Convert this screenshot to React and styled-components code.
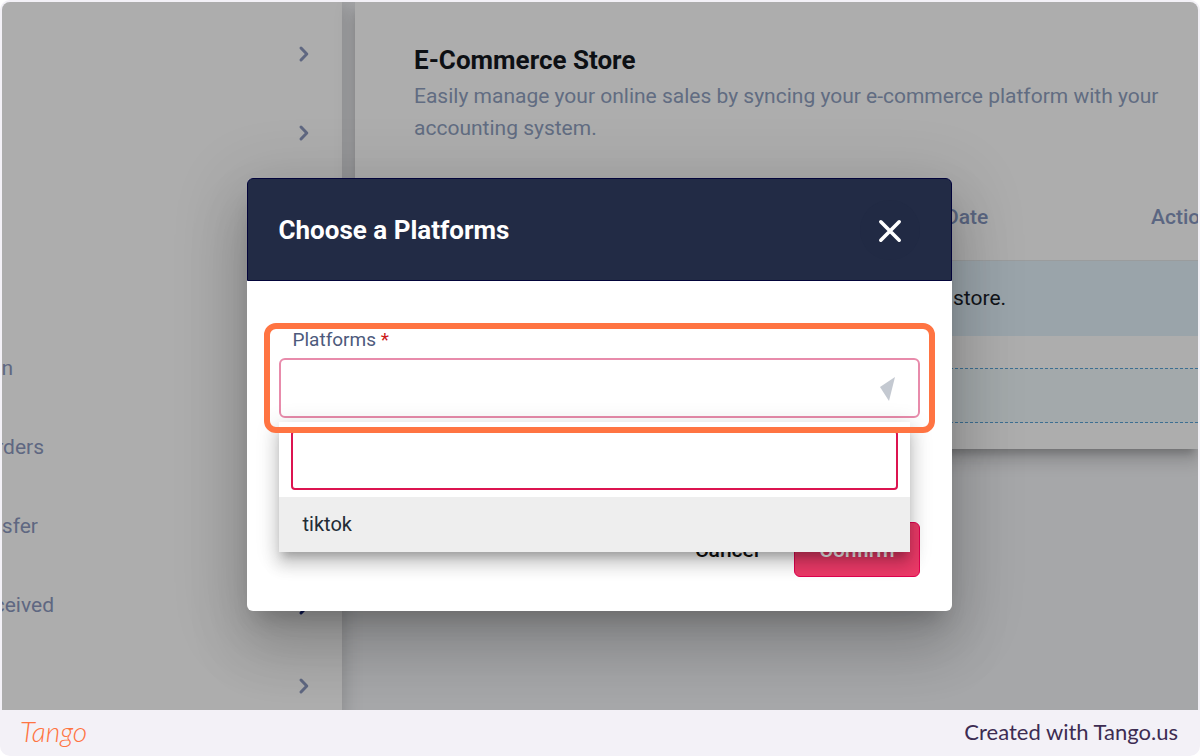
import { useState } from 'react';
import styled, { createGlobalStyle } from 'styled-components';

const navItems = [
  { id: 'first' },
  { id: 'second' },
  { id: 'third' },
  { id: 'fourth' },
  { id: 'n', label: 'n', labelWidth: 11 },
  { id: 'orders', label: 'rders', labelWidth: 42 },
  { id: 'transfer', label: 'sfer', labelWidth: 36 },
  { id: 'received', label: 'ceived', labelWidth: 52, active: true },
  { id: 'last' },
];

const ChevronIcon = () => (
  <svg width="12" height="18" viewBox="0 0 12 18" fill="none" aria-hidden="true">
    <path
      d="M3 3 L8.8 9 L3 15"
      stroke="currentColor"
      strokeWidth="3"
      strokeLinecap="round"
      strokeLinejoin="round"
    />
  </svg>
);

const CloseIcon = () => (
  <svg width="24" height="24" viewBox="0 0 24 24" fill="none" aria-hidden="true">
    <path d="M2.8 2.8 L21.2 21.2 M21.2 2.8 L2.8 21.2" stroke="currentColor" strokeWidth="3.6" strokeLinecap="round" />
  </svg>
);

const ArrowIcon = () => (
  <svg width="16" height="24" viewBox="0 0 16 24" aria-hidden="true">
    <path d="M0 10 L15 0 L9 24 Z" fill="#c4c9d1" />
  </svg>
);

const App = () => {
  const [platform, setPlatform] = useState('');
  const [search, setSearch] = useState('');

  return (
    <Page>
      <GlobalStyle />
      <Screen>
        <Sidebar>
          {navItems.map(({ id, label, labelWidth, active }) => (
            <NavRow key={id} $active={active}>
              <NavLabel $width={labelWidth}>{label}</NavLabel>
              <ChevronIcon />
            </NavRow>
          ))}
        </Sidebar>
        <Main>
          <Card>
            <CardHeader>
              <CardTitle>E-Commerce Store</CardTitle>
              <CardText>
                Easily manage your online sales by syncing your e-commerce platform with your
                accounting system.
              </CardText>
            </CardHeader>
            <StoreTable>
              <colgroup>
                <col width="590" />
                <col width="206" />
                <col width="160" />
              </colgroup>
              <thead>
                <tr>
                  <th />
                  <th>Date</th>
                  <th>Actions</th>
                </tr>
              </thead>
              <tbody>
                <tr>
                  <td />
                  <td>store.</td>
                  <td />
                </tr>
              </tbody>
            </StoreTable>
            <DropZone />
          </Card>
        </Main>

        <Backdrop>
          <Dialog role="dialog" aria-labelledby="dialog-title">
            <DialogHeader>
              <DialogTitle id="dialog-title">Choose a Platforms</DialogTitle>
              <CloseButton type="button" aria-label="Close">
                <CloseIcon />
              </CloseButton>
            </DialogHeader>
            <DialogBody>
              <Field>
                <FieldLabel htmlFor="platform">
                  Platforms <Required>*</Required>
                </FieldLabel>
                <SelectBox>
                  <Select id="platform" value={platform} onChange={(e) => setPlatform(e.target.value)}>
                    <option value="" />
                    <option value="tiktok">tiktok</option>
                  </Select>
                  <SelectArrow>
                    <ArrowIcon />
                  </SelectArrow>
                  <Panel>
                    <SearchWrap>
                      <SearchInput
                        type="text"
                        aria-label="Search platforms"
                        value={search}
                        onChange={(e) => setSearch(e.target.value)}
                      />
                    </SearchWrap>
                    <Option type="button" onClick={() => setPlatform('tiktok')}>
                      tiktok
                    </Option>
                  </Panel>
                </SelectBox>
                <Highlight />
              </Field>
              <Actions>
                <ActionButton type="button">Cancel</ActionButton>
                <ActionButton type="button" $primary>
                  Confirm
                </ActionButton>
              </Actions>
            </DialogBody>
          </Dialog>
        </Backdrop>
      </Screen>
      <Footer>
        <Brand>Tango</Brand>
        <Credit>Created with Tango.us</Credit>
      </Footer>
    </Page>
  );
};

const GlobalStyle = createGlobalStyle`
  *, *::before, *::after {
    box-sizing: border-box;
  }

  body {
    margin: 0;
    background: #ffffff;
    font-family: Roboto, "Liberation Sans", sans-serif;
  }

  h1, h2, p {
    margin: 0;
  }

  button, input, select {
    font-family: inherit;
  }
`;

const Page = styled.div`
  display: flex;
  flex-direction: column;
  min-height: 100vh;
  padding: 2px 2px 0;
  border-radius: 10px;
  background: #f3f1f7;
`;

const Screen = styled.div`
  position: relative;
  display: flex;
  flex: 1;
  overflow: hidden;
  border-radius: 8px 8px 0 0;
  background: #f5f6f9;
`;

const Sidebar = styled.nav`
  flex: none;
  width: 340px;
  padding-top: 12px;
  background: #ffffff;
  box-shadow: 0 0 20px rgba(0, 0, 0, 0.2);

  /* the last row runs past the bottom edge */
  margin-bottom: -16px;
`;

const NavRow = styled.div`
  display: flex;
  align-items: center;
  justify-content: space-between;
  height: 79px;
  padding-right: 32px;
  color: ${({ $active }) => ($active ? '#101f78' : '#8c99bf')};
`;

const NavLabel = styled.span`
  display: flex;
  justify-content: flex-end;
  width: ${({ $width }) => $width || 0}px;
  padding-bottom: 4px;
  overflow: hidden;
  font-size: 21px;
  line-height: 28px;
  color: #8c99bf;
`;

const Main = styled.main`
  flex: 1;
  min-width: 0;
  padding-left: 13px;
`;

const Card = styled.section`
  padding-bottom: 26px;
  background: #ffffff;
  box-shadow:
    0 8px 8px -4px rgba(0, 0, 0, 0.2),
    0 12px 15px 2px rgba(0, 0, 0, 0.1),
    0 4px 21px 3px rgba(0, 0, 0, 0.08);
`;

const CardHeader = styled.header`
  padding: 40px 16px 30px 59px;
`;

const CardTitle = styled.h1`
  font-size: 26px;
  font-weight: 700;
  line-height: 36px;
  color: #14181e;
`;

const CardText = styled.p`
  padding-top: 2px;
  font-size: 21px;
  line-height: 32px;
  color: #909fc0;
`;

const StoreTable = styled.table`
  width: 956px;
  table-layout: fixed;
  border-collapse: collapse;
  text-align: left;

  th {
    height: 86px;
    padding: 0;
    border-bottom: 1px solid #e4e6e8;
    font-size: 21px;
    font-weight: 500;
    color: #8797c0;
  }

  td {
    height: 76px;
    padding: 0 8px;
    background: #e3f2fb;
    font-size: 21px;
    color: #1a2128;
  }
`;

const DropZone = styled.div`
  height: 55px;
  margin-top: 32px;
  border: dashed #5aa4d8;
  border-width: 1px 0;
  background: #f0f9fd;
`;

const Backdrop = styled.div`
  position: absolute;
  inset: 0;
  display: flex;
  align-items: flex-start;
  justify-content: center;
  padding: 176px 2px 0 0;
  background: rgba(0, 0, 0, 0.32);
`;

const Dialog = styled.div`
  width: 705px;
  border-radius: 6px;
  background: #ffffff;
  box-shadow:
    0 16px 22px -10px rgba(0, 0, 0, 0.2),
    0 36px 57px 4px rgba(0, 0, 0, 0.14),
    0 14px 69px 12px rgba(0, 0, 0, 0.12);
`;

const DialogHeader = styled.header`
  display: flex;
  align-items: center;
  justify-content: space-between;
  height: 103px;
  padding: 0 31px;
  border: 1px solid #03043a;
  border-radius: 6px 6px 0 0;
  background: #222b45;
  color: #ffffff;
`;

const DialogTitle = styled.h2`
  font-size: 26px;
  font-weight: 700;
  line-height: 32px;
`;

const CloseButton = styled.button`
  display: grid;
  place-items: center;
  width: 60px;
  height: 60px;
  padding: 2px 0 0;
  border: 0;
  border-radius: 50%;
  background: #212a44;
  color: #ffffff;
`;

const DialogBody = styled.div`
  padding: 44px 32px 34px;
`;

const Field = styled.div`
  position: relative;
`;

const FieldLabel = styled.label`
  display: block;
  height: 33px;
  padding-left: 14px;
  font-size: 19px;
  line-height: 30px;
  color: #4d5a7c;
`;

const Required = styled.span`
  color: #cc1a1a;
`;

const SelectBox = styled.div`
  position: relative;
`;

const Select = styled.select`
  display: block;
  width: 100%;
  height: 60px;
  padding: 0 48px 0 16px;
  border: 2px solid #e88bab;
  border-radius: 6px;
  background: #ffffff;
  font-size: 19px;
  appearance: none;
`;

const SelectArrow = styled.span`
  position: absolute;
  top: 19px;
  right: 24px;
  display: flex;
  pointer-events: none;
`;

const Panel = styled.div`
  position: absolute;
  top: 64px;
  left: 0;
  right: 10px;
  background: #ffffff;
  box-shadow:
    0 8px 8px -4px rgba(0, 0, 0, 0.2),
    0 12px 15px 2px rgba(0, 0, 0, 0.14),
    0 4px 21px 3px rgba(0, 0, 0, 0.12);
`;

const SearchWrap = styled.div`
  padding: 8px 12px 7px;
`;

const SearchInput = styled.input`
  display: block;
  width: 100%;
  height: 60px;
  padding: 0 12px;
  border: 2px solid #dc1450;
  border-radius: 4px;
  outline: none;
  font-size: 19px;
`;

const Option = styled.button`
  display: block;
  width: 100%;
  height: 55px;
  padding: 0 24px 2px;
  border: 0;
  background: #eeeeee;
  font-size: 20px;
  text-align: left;
  color: #222b35;
`;

const Highlight = styled.div`
  position: absolute;
  inset: -2px -15px -15px;
  border: 6px solid #ff7442;
  border-radius: 12px;
  pointer-events: none;
`;

const Actions = styled.div`
  display: flex;
  justify-content: flex-end;
  gap: 10px;
  padding-top: 104px;
`;

const ActionButton = styled.button`
  height: 55px;
  padding: 0 24px;
  border: 1px solid ${({ $primary }) => ($primary ? '#e0004f' : 'transparent')};
  border-radius: 6px;
  background: ${({ $primary }) => ($primary ? '#ec3a68' : 'transparent')};
  font-size: 21px;
  font-weight: 500;
  color: ${({ $primary }) => ($primary ? '#ffffff' : '#111111')};
`;

const Footer = styled.footer`
  display: flex;
  align-items: center;
  justify-content: space-between;
  height: 46px;
  padding: 0 20px 4px 18px;
`;

const Brand = styled.span`
  font-family: Lato, "Liberation Sans", sans-serif;
  font-size: 28px;
  font-style: italic;
  font-weight: 300;
  color: #ff7442;
`;

const Credit = styled.span`
  font-family: Lato, "Liberation Sans", sans-serif;
  font-size: 22px;
  color: #3d2c52;
`;

export default App;
